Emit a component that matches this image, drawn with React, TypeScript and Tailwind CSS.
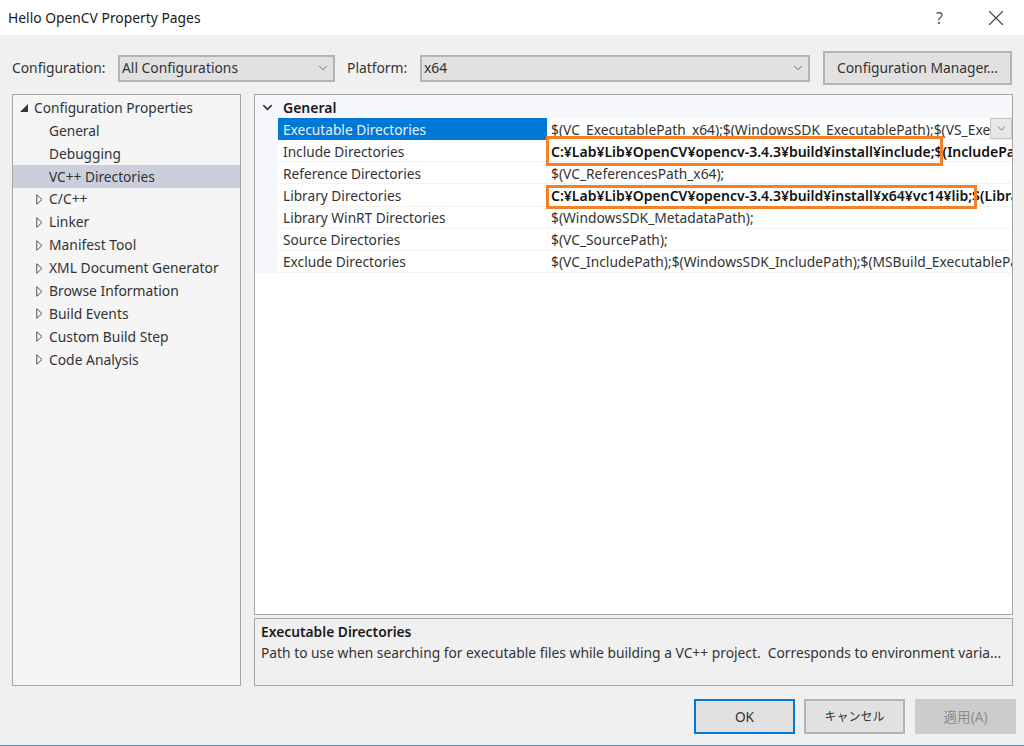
import { ChevronDown, X } from 'lucide-react'

const TREE_CHILDREN = ['General', 'Debugging', 'VC++ Directories']
const TREE_GROUPS = [
  'C/C++',
  'Linker',
  'Manifest Tool',
  'XML Document Generator',
  'Browse Information',
  'Build Events',
  'Custom Build Step',
  'Code Analysis',
]

const ROWS = [
  { name: 'Executable Directories', value: '$(VC_ExecutablePath_x64);$(WindowsSDK_ExecutablePath);$(VS_ExecutablePath);$(MSBuild_ExecutablePath)' },
  { name: 'Include Directories', value: '$(IncludePath);$(VC_IncludePath)', bold: 'C:¥Lab¥Lib¥OpenCV¥opencv-3.4.3¥build¥install¥include;' },
  { name: 'Reference Directories', value: '$(VC_ReferencesPath_x64);' },
  { name: 'Library Directories', value: '$(LibraryPath);$(VC_LibraryPath_x64)', bold: 'C:¥Lab¥Lib¥OpenCV¥opencv-3.4.3¥build¥install¥x64¥vc14¥lib;' },
  { name: 'Library WinRT Directories', value: '$(WindowsSDK_MetadataPath);' },
  { name: 'Source Directories', value: '$(VC_SourcePath);' },
  { name: 'Exclude Directories', value: '$(VC_IncludePath);$(WindowsSDK_IncludePath);$(MSBuild_ExecutablePath);$(VC_LibraryPath_x64)' },
]

function TreeArrow() {
  return (
    <svg width="7" height="11" viewBox="0 0 7 11" className="shrink-0">
      <path d="M0.75 0.75 L6 5.5 L0.75 10.25 Z" fill="none" stroke="#555555" strokeWidth="1" />
    </svg>
  )
}

function Combo({ label, className }: { label: string; className: string }) {
  return (
    <div className={`flex h-[27px] items-center justify-between border-2 border-[#b4b4b4] bg-[#e1e1e1] pl-[2px] pr-[3px] ${className}`}>
      <span>{label}</span>
      <ChevronDown className="h-[14px] w-[14px] text-[#606060]" strokeWidth={1.5} />
    </div>
  )
}

export default function App() {
  return (
    <div className="flex h-[746px] w-[1024px] flex-col overflow-hidden border-b border-[#4a8ac4] bg-[#f0f0f0] font-['Noto_Sans','Noto_Sans_CJK_JP',sans-serif] text-[13.7px] leading-[20px] text-[#333333]">
      <div className="flex h-[35px] shrink-0 items-center justify-between bg-white pl-[8px] pr-[15px] text-[13.85px] text-[#1a1a1a]">
        <span>Hello OpenCV Property Pages</span>
        <div className="flex items-center gap-[40px]">
          <span className="text-[16px] text-[#555555]">?</span>
          <X className="h-[26px] w-[26px] text-[#444444]" strokeWidth={1} />
        </div>
      </div>

      <div className="flex h-[59px] shrink-0 items-center pl-[12px] pt-[7px] text-[13.85px]">
        <span className="w-[106px]">Configuration:</span>
        <Combo label="All Configurations" className="w-[217px]" />
        <span className="ml-[12px] w-[73px]">Platform:</span>
        <Combo label="x64" className="w-[390px]" />
        <button className="ml-[13px] h-[34px] w-[189px] border-2 border-[#b4b4b4] bg-[#e1e1e1]">Configuration Manager...</button>
      </div>

      <div className="flex h-[592px] shrink-0 gap-[13px] pl-[12px]">
        <div className="flex w-[229px] flex-col border border-[#a6a6a6] bg-[#f5f5f5] pt-[1px]">
          <div className="flex h-[23px] items-center gap-[6px] pl-[7px]">
            <svg width="8" height="8" viewBox="0 0 8 8" className="shrink-0">
              <path d="M8 0 V8 H0 Z" fill="#333333" />
            </svg>
            <span>Configuration Properties</span>
          </div>
          {TREE_CHILDREN.map((item, i) => (
            <div key={item} className={`flex h-[23px] items-center pl-[36px] ${i === 2 ? 'bg-[#cbcedb]' : ''}`}>
              {item}
            </div>
          ))}
          {TREE_GROUPS.map((item) => (
            <div key={item} className="flex h-[22.9px] items-center gap-[6px] pl-[23px] text-[13.85px]">
              <TreeArrow />
              <span>{item}</span>
            </div>
          ))}
        </div>

        <div className="flex w-[759px] flex-col">
          <div className="relative h-[521px] border border-[#a6a6a6] bg-white">
            <div className="flex h-[23px] items-center bg-[#f5f7fb] pt-[2px]">
              <ChevronDown className="ml-[5px] h-[15px] w-[15px] text-[#333333]" strokeWidth={2.5} />
              <span className="ml-[8px] text-[14px] font-semibold text-[#1a1a1a]">General</span>
            </div>
            {ROWS.map((row, i) => (
              <div key={row.name} className="relative flex h-[22.15px] bg-[#f5f7fb]">
                <div className="w-[23px] shrink-0" />
                <div className={`flex w-[269px] shrink-0 items-center pl-[5px] pt-[2px] ${i === 0 ? 'bg-[#0078d7] text-[#e6f1fb]' : 'border-b border-[#f3f3f3] bg-white'}`}>
                  {row.name}
                </div>
                <div className="ml-[1px] flex min-w-0 flex-1 items-center overflow-hidden whitespace-nowrap border-b border-[#f3f3f3] bg-white pl-[3px] pt-[2px] text-[13.8px]">
                  {row.bold && <span className="text-[14px] font-semibold text-[#111111]">{row.bold}</span>}
                  {row.bold ? <span className="text-[14px] font-semibold text-[#111111]">{row.value}</span> : row.value}
                </div>
                {i === 0 && (
                  <div className="absolute right-0 top-0 flex h-[21px] w-[22px] items-center justify-center border border-[#c4c4c4] bg-[#e8e8e8]">
                    <ChevronDown className="h-[13px] w-[13px] text-[#606060]" strokeWidth={1.5} />
                  </div>
                )}
              </div>
            ))}
            <div className="absolute left-[291px] top-[41px] h-[30px] w-[397px] border-[3px] border-[#f58025]" />
            <div className="absolute left-[291px] top-[90px] h-[24px] w-[431px] border-[3px] border-[#f58025]" />
          </div>
          <div className="mt-[3px] h-[68px] border border-[#a6a6a6] bg-[#f0f0f0] pl-[6px] pt-[3px] text-[13.8px]">
            <div className="font-semibold text-[#1a1a1a]">Executable Directories</div>
            <div className="mt-[1px] whitespace-pre">Path to use when searching for executable files while building a VC++ project.  Corresponds to environment varia...</div>
          </div>
        </div>
      </div>

      <div className="flex flex-1 justify-end gap-[9px] pr-[8px] pt-[13px]">
        <button className="h-[35px] w-[101px] border-2 border-[#0078d7] bg-[#e1e1e1]">OK</button>
        <button className="h-[35px] w-[101px] border-2 border-[#b4b4b4] bg-[#e1e1e1] text-[12px]">キャンセル</button>
        <button className="ml-[1px] h-[35px] w-[101px] bg-[#cccccc] text-[#8c8c8c]">適用(A)</button>
      </div>
    </div>
  )
}
